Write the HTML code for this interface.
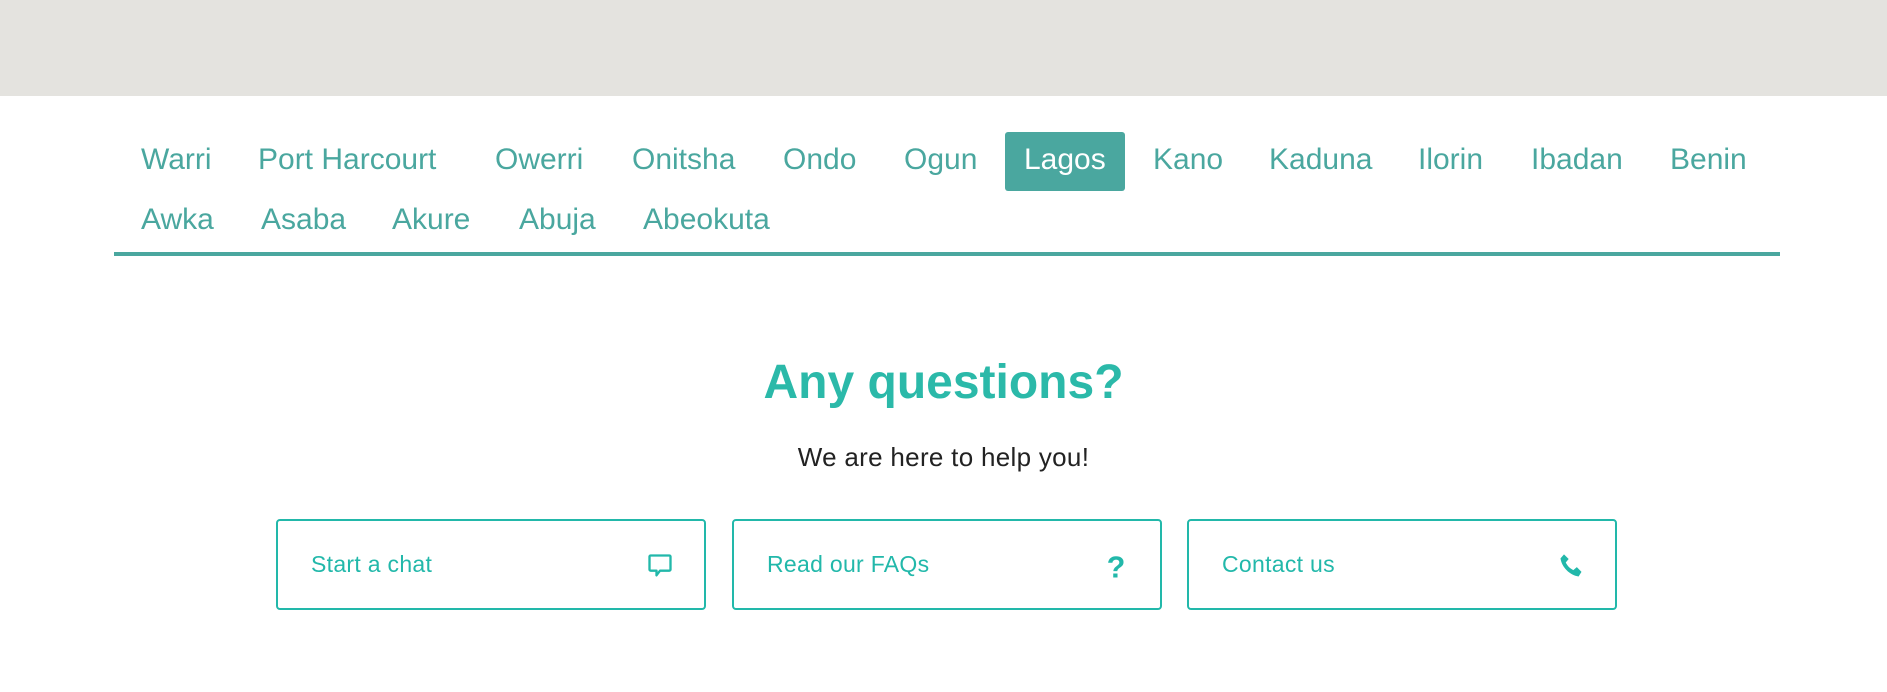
<!DOCTYPE html>
<html><head><style>
body{margin:0;width:1887px;height:692px;background:#fff;font-family:"Liberation Sans",sans-serif;position:relative;overflow:hidden}
.top{position:absolute;left:0;top:0;width:1887px;height:96px;background:#e4e3df}
.n{position:absolute;font-size:30px;color:#4aa79f;line-height:34px;white-space:nowrap}
.r1{top:143px}.r2{top:203px}
.lagos{position:absolute;left:1005px;top:132px;width:120px;height:59px;background:#4aa79f;border-radius:3px}
.line{position:absolute;left:114px;top:252px;width:1666px;height:4px;background:#4aa79f}
h1{position:absolute;top:354px;left:0;width:1887px;text-align:center;margin:0;font-size:48px;color:#2bb9a9;line-height:58px}
.sub{position:absolute;top:442px;width:1887px;text-align:center;font-size:26px;letter-spacing:0.3px;color:#222}
.b{position:absolute;top:519px;width:426px;height:87px;border:2px solid #22b8aa;border-radius:4px;box-sizing:content-box}
.b span{position:absolute;left:33px;top:30px;font-size:23px;letter-spacing:0.3px;color:#22b8aa}
.b svg{position:absolute;right:30px;top:31px}
</style></head><body>
<div class="top"></div>
<div class="lagos"></div>
<div class="n r1" style="left:141px">Warri</div>
<div class="n r1" style="left:258px">Port Harcourt</div>
<div class="n r1" style="left:495px">Owerri</div>
<div class="n r1" style="left:632px">Onitsha</div>
<div class="n r1" style="left:783px">Ondo</div>
<div class="n r1" style="left:904px">Ogun</div>
<div class="n r1" style="left:1024px;color:#fff">Lagos</div>
<div class="n r1" style="left:1153px">Kano</div>
<div class="n r1" style="left:1269px">Kaduna</div>
<div class="n r1" style="left:1418px">Ilorin</div>
<div class="n r1" style="left:1531px">Ibadan</div>
<div class="n r1" style="left:1670px">Benin</div>
<div class="n r2" style="left:141px">Awka</div>
<div class="n r2" style="left:261px">Asaba</div>
<div class="n r2" style="left:392px">Akure</div>
<div class="n r2" style="left:519px">Abuja</div>
<div class="n r2" style="left:643px">Abeokuta</div>
<div class="line"></div>
<h1>Any questions?</h1>
<div class="sub">We are here to help you!</div>
<div class="b" style="left:276px"><span>Start a chat</span><svg width="28" height="28" viewBox="0 0 24 24"><path d="M4 3h16a1 1 0 0 1 1 1v11a1 1 0 0 1-1 1h-8l-3 4v-4H4a1 1 0 0 1-1-1V4a1 1 0 0 1 1-1z" fill="none" stroke="#22b8aa" stroke-width="2" stroke-linejoin="round"/></svg></div>
<div class="b" style="left:732px"><span>Read our FAQs</span><svg width="28" height="28" viewBox="0 0 24 24"><text x="12" y="22" text-anchor="middle" font-family="Liberation Sans" font-weight="bold" font-size="26" fill="#22b8aa">?</text></svg></div>
<div class="b" style="left:1187px"><span>Contact us</span><svg width="28" height="28" viewBox="0 0 24 24"><path d="M6 2l4 4-2.5 3c1.5 3 3.5 5 6.5 6.5L17 13l4 4-2.5 4C11 20 4 13 3 5.5z" fill="#22b8aa"/></svg></div>
</body></html>
